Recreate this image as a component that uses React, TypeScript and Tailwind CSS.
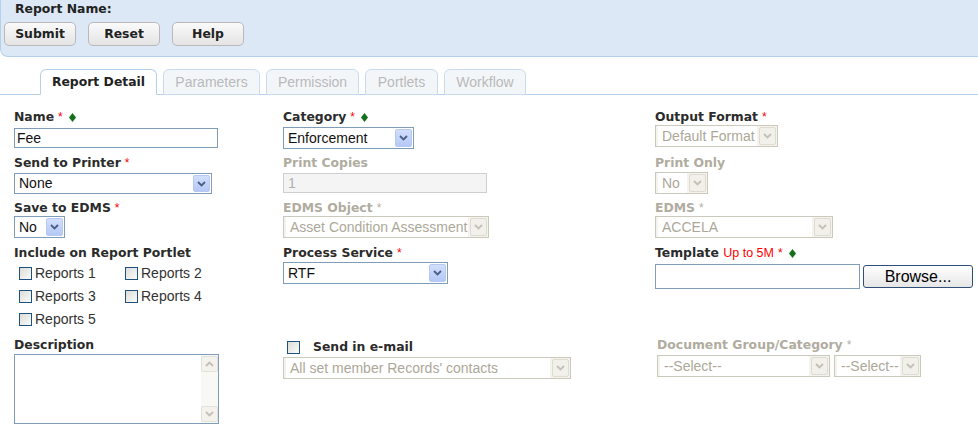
import React from "react";

const font = "font-['Liberation_Sans',Arial,sans-serif]";
const boldFont = "font-['DejaVu_Sans',Tahoma,sans-serif] font-bold";

function Req({ dim }: { dim?: boolean }) {
    return <span className={`ml-[4px] text-[12px] font-normal ${font} ${dim ? "text-[#b3afa3]" : "text-[#f00]"}`}>*</span>;
}

function Diamond() {
    return (
        <svg width="7" height="9" viewBox="0 0 7 9" className="inline-block ml-[6px] align-[-1px]">
            <path d="M3.5 0 L7 4.5 L3.5 9 L0 4.5 Z" fill="#13701b" />
        </svg>
    );
}

function Label({ children, dim }: { children: React.ReactNode; dim?: boolean }) {
    return <div className={`h-[16px] leading-[16px] text-[12.4px] whitespace-nowrap ${boldFont} ${dim ? "text-[#b0ac9f]" : "text-[#2b2b2b]"}`}>{children}</div>;
}

function Chevron({ dim }: { dim?: boolean }) {
    return (
        <svg width="9" height="6" viewBox="0 0 9 6">
            <path d="M1 1 L4.5 4.5 L8 1" fill="none" stroke={dim ? "#c3c0b5" : "#4a5d84"} strokeWidth="1.8" />
        </svg>
    );
}

function Select({ w, h = 21, value, dim, className = "" }: { w: number; h?: number; value: string; dim?: boolean; className?: string }) {
    return (
        <div
            className={`flex items-center border ${dim ? "border-[#cbc8bc] bg-[#f4f3ee]" : "border-[#7f9db9] bg-white"} ${className}`}
            style={{ width: w, height: h }}
        >
            <div className={`flex-1 h-full flex items-center pl-[4px] text-[14px] whitespace-nowrap overflow-hidden ${dim ? "text-[#aca899] bg-white m-[2px] pl-[1px] h-[calc(100%-4px)]" : "text-[#111]"}`}>{value}</div>
            <div
                className={`mr-[1px] flex items-center justify-center rounded-[2px] border ${dim ? "border-[#dddbd2] bg-[#f1f0ea]" : "border-[#b7c9f3] bg-gradient-to-b from-[#d2defc] to-[#b5c9f6]"}`}
                style={{ width: 17, height: h - 4 }}
            >
                <Chevron dim={dim} />
            </div>
        </div>
    );
}

function Check({ label, bold }: { label: string; bold?: boolean }) {
    return (
        <div className="flex items-center h-[23px]">
            <span className="w-[13px] h-[13px] border border-[#1c5180] bg-gradient-to-br from-[#dcdcd7] to-[#fbfbfa]" />
            <span className={bold ? `ml-[13px] text-[12.4px] text-[#2b2b2b] ${boldFont}` : "ml-[3px] text-[14px] text-[#333]"}>{label}</span>
        </div>
    );
}

function HeadButton({ children }: { children: React.ReactNode }) {
    return (
        <button className={`w-[72px] h-[24px] rounded-[5px] border border-[#b9b9b9] bg-gradient-to-b from-[#fafafa] to-[#e4e4e4] text-[12.4px] text-[#222] ${boldFont}`}>
            {children}
        </button>
    );
}

function Tab({ children, active, w }: { children: React.ReactNode; active?: boolean; w: number }) {
    return (
        <div
            className={`h-[26px] -mb-px flex items-center justify-center rounded-t-[6px] border ${active ? `border-[#b5d0ea] border-b-white bg-white text-[12.4px] text-[#222] ${boldFont}` : "border-[#c9dcef] bg-[#f3f6f9] text-[14px] text-[#b9b9b9]"}`}
            style={{ width: w }}
        >
            {children}
        </div>
    );
}

export default function App() {
    return (
        <div className={`w-[978px] h-[425px] bg-white overflow-hidden ${font}`}>
            <div className="h-[57px] bg-[#dce8f5] border-b border-l border-[#b5d0ea] rounded-bl-[8px] pt-[1px]">
                <div className={`pl-[14px] h-[16px] leading-[16px] text-[12.4px] text-[#222] ${boldFont}`}>Report Name:</div>
                <div className="flex gap-[12px] pl-[3px] mt-[5px]">
                    <HeadButton>Submit</HeadButton>
                    <HeadButton>Reset</HeadButton>
                    <HeadButton>Help</HeadButton>
                </div>
            </div>

            <div className="mt-[12px] flex gap-[6px] pl-[40px] border-b border-[#b5d0ea] rounded-tl-[4px]">
                <Tab active w={117}>Report Detail</Tab>
                <Tab w={97}>Parameters</Tab>
                <Tab w={93}>Permission</Tab>
                <Tab w={73}>Portlets</Tab>
                <Tab w={82}>Workflow</Tab>
            </div>

            <div className="grid grid-cols-[269px_372px_1fr] grid-rows-[46px_45px_45px_92px_auto] pl-[14px] pt-[14px]">
                {/* row 1 */}
                <div>
                    <Label>Name<Req /><Diamond /></Label>
                    <input readOnly value="Fee" className="mt-[3px] w-[204px] h-[20px] border border-[#7f9db9] px-[2px] text-[14px] text-[#111] outline-none" />
                </div>
                <div>
                    <Label>Category<Req /><Diamond /></Label>
                    <Select w={131} h={22} value="Enforcement" className="mt-[2px]" />
                </div>
                <div>
                    <Label>Output Format<Req /></Label>
                    <Select w={123} h={22} value="Default Format" dim />
                </div>

                {/* row 2 */}
                <div>
                    <Label>Send to Printer<Req /></Label>
                    <Select w={198} h={21} value="None" className="mt-[2px]" />
                </div>
                <div>
                    <Label dim>Print Copies</Label>
                    <div className="mt-[2px] w-[204px] h-[20px] border border-[#cfcfcf] bg-[#f4f4f4] pl-[4px] text-[14px] leading-[18px] text-[#b0b0b0]">1</div>
                </div>
                <div>
                    <Label dim>Print Only</Label>
                    <Select w={53} h={22} value="No" dim className="mt-[1px]" />
                </div>

                {/* row 3 */}
                <div>
                    <Label>Save to EDMS<Req /></Label>
                    <Select w={51} h={22} value="No" />
                </div>
                <div>
                    <Label dim>EDMS Object<Req dim /></Label>
                    <Select w={206} h={22} value="Asset Condition Assessment" dim />
                </div>
                <div>
                    <Label dim>EDMS<Req dim /></Label>
                    <Select w={178} h={22} value="ACCELA" dim />
                </div>

                {/* row 4 */}
                <div>
                    <Label>Include on Report Portlet</Label>
                    <div className="grid grid-cols-[106px_100px] pl-[5px] mt-[1px]">
                        <Check label="Reports 1" />
                        <Check label="Reports 2" />
                        <Check label="Reports 3" />
                        <Check label="Reports 4" />
                        <Check label="Reports 5" />
                    </div>
                </div>
                <div>
                    <Label>Process Service<Req /></Label>
                    <Select w={165} h={22} value="RTF" className="mt-[1px]" />
                </div>
                <div>
                    <Label>Template <span className={`text-[12.5px] font-normal text-[#f00] ${font}`}>Up to 5M</span><Req /><Diamond /></Label>
                    <div className="flex items-center mt-[3px]">
                        <div className="w-[205px] h-[25px] border border-[#7f9db9] bg-white" />
                        <button className="ml-[3px] w-[110px] h-[23px] rounded-[3px] border border-[#2f4f77] bg-gradient-to-b from-white to-[#e6e6e6] text-[16px] text-black leading-none">Browse...</button>
                    </div>
                </div>

                {/* row 5 */}
                <div>
                    <Label>Description</Label>
                    <div className="mt-[1px] w-[205px] h-[70px] border border-[#7f9db9] bg-white flex justify-end">
                        <div className="w-[17px] h-full bg-[#f8f8f4] flex flex-col justify-between py-[1px]">
                            <div className="h-[16px] border border-[#e2e1da] bg-[#f3f2ec] flex items-center justify-center rounded-[2px]">
                                <svg width="9" height="6" viewBox="0 0 9 6"><path d="M1 5 L4.5 1.5 L8 5" fill="none" stroke="#c3c0b5" strokeWidth="1.8" /></svg>
                            </div>
                            <div className="h-[16px] border border-[#e2e1da] bg-[#f3f2ec] flex items-center justify-center rounded-[2px]">
                                <Chevron dim />
                            </div>
                        </div>
                    </div>
                </div>
                <div>
                    <div className="pl-[4px] -mt-[1px]"><Check label="Send in e-mail" bold /></div>
                    <Select w={288} h={22} value="All set member Records' contacts" dim className="-mt-[2px]" />
                </div>
                <div className="pl-[2px]">
                    <Label dim>Document Group/Category<Req dim /></Label>
                    <div className="flex gap-[4px] mt-[2px]">
                        <Select w={173} h={22} value="--Select--" dim />
                        <Select w={87} h={22} value="--Select--" dim />
                    </div>
                </div>
            </div>
        </div>
    );
}
